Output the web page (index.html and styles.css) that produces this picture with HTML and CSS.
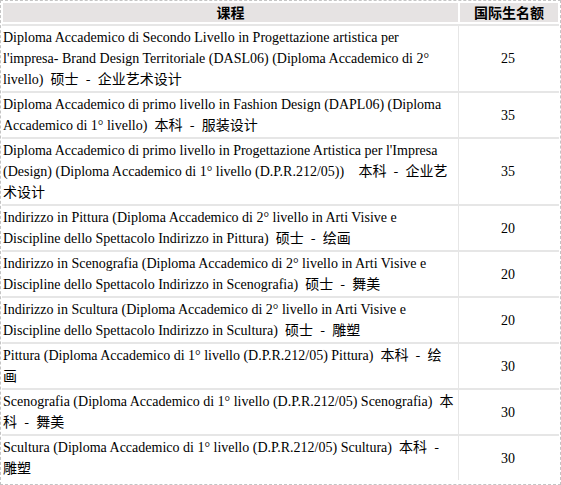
FILE: index.html
```html
<!DOCTYPE html>
<html lang="zh">
<head>
<meta charset="utf-8">
<link rel="stylesheet" href="styles.css">
</head>
<body>
<div class="frame">
<table class="courses">
<colgroup><col class="c-name"><col class="c-num"></colgroup>
<thead>
<tr><th>课程</th><th>国际生名额</th></tr>
</thead>
<tbody>
<tr><td class="name">Diploma Accademico di Secondo Livello in Progettazione artistica per l'impresa- Brand Design Territoriale (DASL06) (Diploma Accademico di 2° livello)<span class="cn"> 硕士 - 企业艺术设计</span></td><td class="num">25</td></tr>
<tr><td class="name">Diploma Accademico di primo livello in Fashion Design (DAPL06) (Diploma Accademico di 1° livello)<span class="cn"> 本科 - 服装设计</span></td><td class="num">35</td></tr>
<tr><td class="name">Diploma Accademico di primo livello in Progettazione Artistica per l'Impresa (Design) (Diploma Accademico di 1° livello (D.P.R.212/05))<span class="cn">&nbsp; 本科 - 企业艺术设计</span></td><td class="num">35</td></tr>
<tr><td class="name">Indirizzo in Pittura (Diploma Accademico di 2° livello in Arti Visive e Discipline dello Spettacolo Indirizzo in Pittura)<span class="cn"> 硕士 - 绘画</span></td><td class="num">20</td></tr>
<tr><td class="name">Indirizzo in Scenografia (Diploma Accademico di 2° livello in Arti Visive e Discipline dello Spettacolo Indirizzo in Scenografia)<span class="cn"> 硕士 - 舞美</span></td><td class="num">20</td></tr>
<tr><td class="name">Indirizzo in Scultura (Diploma Accademico di 2° livello in Arti Visive e Discipline dello Spettacolo Indirizzo in Scultura)<span class="cn"> 硕士 - 雕塑</span></td><td class="num">20</td></tr>
<tr><td class="name">Pittura (Diploma Accademico di 1° livello (D.P.R.212/05) Pittura)<span class="cn"> 本科 - 绘画</span></td><td class="num">30</td></tr>
<tr><td class="name">Scenografia (Diploma Accademico di 1° livello (D.P.R.212/05) Scenografia)<span class="cn"> 本科 - 舞美</span></td><td class="num">30</td></tr>
<tr><td class="name">Scultura (Diploma Accademico di 1° livello (D.P.R.212/05) Scultura)<span class="cn"> 本科 - 雕塑</span></td><td class="num">30</td></tr>
</tbody>
</table>
</div>
</body>
</html>
```
FILE: styles.css
```css
html, body {
  margin: 0;
  padding: 0;
  background: #fff;
}
.frame {
  width: 561px;
  height: 485px;
  box-sizing: border-box;
  border: 1px dashed #c4c4c4;
  padding: 1px;
  overflow: hidden;
}
.courses {
  width: 100%;
  border-collapse: separate;
  border-spacing: 0;
  table-layout: fixed;
  font-family: "Liberation Serif", "Times New Roman", serif;
  font-size: 14px;
  color: #000;
}
.c-name { width: 457px; }
.c-num { width: auto; }
.courses th {
  background: #e6e3e3;
  border: 1px solid #fff;
  border-bottom-width: 2px;
  height: 19px;
  padding: 0;
  font-family: "Noto Sans CJK SC", sans-serif;
  font-weight: bold;
  font-size: 14px;
  line-height: 19px;
  color: #000;
  text-align: center;
}
.courses td {
  border-top: 2px solid #e6e6e6;
  padding: 1px 3px 1px 1px;
  line-height: 21px;
  vertical-align: middle;
}
.courses td.name {
  border-right: 1px solid #e6e6e6;
  text-align: left;
}
.courses td.num {
  text-align: center;
}
.cn {
  font-family: "Noto Sans CJK SC", sans-serif;
  line-height: 14px;
  word-spacing: 4px;
}
```
